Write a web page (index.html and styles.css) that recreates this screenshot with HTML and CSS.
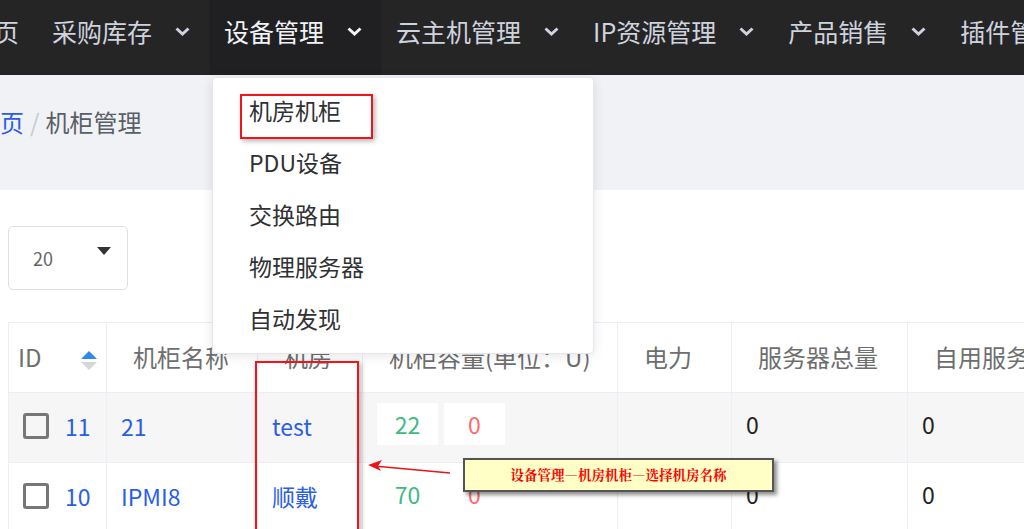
FILE: index.html
```html
<!doctype html>
<html lang="zh-CN">
 <head>
  <meta charset="UTF-8">
  <title>机柜管理</title>
  <link rel="stylesheet" href="styles.css">
 </head>
 <body>
  <div class="topnav">
   <div class="nav-item home">首页</div>
   <div class="nav-item">采购库存 <svg class="chev" viewBox="0 0 15 9"><polyline points="1.5,1.5 7.5,7 13.5,1.5"/></svg></div>
   <div class="nav-item active">设备管理 <svg class="chev" viewBox="0 0 15 9"><polyline points="1.5,1.5 7.5,7 13.5,1.5"/></svg></div>
   <div class="nav-item">云主机管理 <svg class="chev" viewBox="0 0 15 9"><polyline points="1.5,1.5 7.5,7 13.5,1.5"/></svg></div>
   <div class="nav-item">IP资源管理 <svg class="chev" viewBox="0 0 15 9"><polyline points="1.5,1.5 7.5,7 13.5,1.5"/></svg></div>
   <div class="nav-item">产品销售 <svg class="chev" viewBox="0 0 15 9"><polyline points="1.5,1.5 7.5,7 13.5,1.5"/></svg></div>
   <div class="nav-item">插件管理 <svg class="chev" viewBox="0 0 15 9"><polyline points="1.5,1.5 7.5,7 13.5,1.5"/></svg></div>
  </div>

  <div class="breadcrumb">
   <span class="crumb-link">首页</span>
   <span class="crumb-sep">/</span>
   <span class="crumb-cur">机柜管理</span>
  </div>

  <div class="content">
   <div class="page-size">
    <span>20</span>
    <span class="caret"></span>
   </div>

   <table class="grid">
    <colgroup>
     <col style="width:98px"><col style="width:151px"><col style="width:105px"><col style="width:255px">
     <col style="width:114px"><col style="width:176px"><col style="width:200px">
    </colgroup>
    <thead>
     <tr>
      <th class="th-id">ID <span class="sort"><i class="up"></i><i class="down"></i></span></th>
      <th>机柜名称</th>
      <th>机房</th>
      <th>机柜容量(单位：U)</th>
      <th>电力</th>
      <th>服务器总量</th>
      <th>自用服务器</th>
     </tr>
    </thead>
    <tbody>
     <tr class="hover">
      <td><span class="check"></span><a class="link">11</a></td>
      <td><a class="link">21</a></td>
      <td><a class="link">test</a></td>
      <td><span class="cap green">22</span><span class="cap red">0</span></td>
      <td></td>
      <td>0</td>
      <td>0</td>
     </tr>
     <tr>
      <td><span class="check"></span><a class="link">10</a></td>
      <td><a class="link">IPMI8</a></td>
      <td><a class="link">顺戴</a></td>
      <td><span class="cap green">70</span><span class="cap red">0</span></td>
      <td></td>
      <td>0</td>
      <td>0</td>
     </tr>
    </tbody>
   </table>
  </div>

  <!-- open submenu of 设备管理 -->
  <div class="dropdown">
   <div class="dd-item">机房机柜</div>
   <div class="dd-item">PDU设备</div>
   <div class="dd-item">交换路由</div>
   <div class="dd-item">物理服务器</div>
   <div class="dd-item">自动发现</div>
  </div>

  <!-- annotation marks -->
  <div class="mark mark-menu"></div>
  <div class="mark mark-col"></div>
  <svg class="arrow" width="90" height="20" viewBox="0 0 90 20">
   <line x1="84" y1="14" x2="8" y2="7" stroke="#e8141a" stroke-width="1.5"/>
   <polygon points="2,6 16,1 12,7 15,12" fill="#e8141a"/>
  </svg>
  <div class="note">设备管理—机房机柜—选择机房名称</div>
 </body>
</html>
```

FILE: styles.css
```css
* {
  margin: 0;
  padding: 0;
  box-sizing: border-box;
}

body {
  font-family: "Noto Sans CJK SC", "Noto Sans", sans-serif;
  background: #fff;
  width: 1024px;
  height: 529px;
  overflow: hidden;
  position: relative;
}

.topnav {
  height: 75px;
  background: #252526;
  display: flex;
  align-items: stretch;
  margin-left: -46px;
  white-space: nowrap;
}

.nav-item {
  display: flex;
  align-items: center;
  padding: 0 19px 12px 15px;
  color: #cfd3de;
  font-size: 25px;
  line-height: 1;
}

.nav-item.home {
  padding-right: 18px;
}

.nav-item.active {
  background: #202022;
  color: #f2f3f7;
}

.chev {
  width: 15px;
  height: 9px;
  margin-left: 23px;
  fill: none;
  stroke: currentColor;
  stroke-width: 3;
}

.breadcrumb {
  height: 115px;
  background: #f0f2f5;
  display: flex;
  align-items: center;
  font-size: 24px;
  margin-left: -24px;
  padding-bottom: 22px;
}

.crumb-link {
  color: #2a5ee8;
}

.crumb-sep {
  color: #c8cbd1;
  margin: 0 6px 0 6px;
}

.crumb-cur {
  color: #5a5e66;
}

.content {
  padding: 36px 0 0 8px;
}

.page-size {
  width: 120px;
  height: 64px;
  border: 1px solid #dcdfe6;
  border-radius: 5px;
  display: flex;
  align-items: center;
  justify-content: space-between;
  padding: 0 16px 0 24px;
  color: #666;
  font-size: 18px;
}

.caret {
  width: 0;
  height: 0;
  border-left: 7px solid transparent;
  border-right: 7px solid transparent;
  border-top: 8px solid #333;
  margin-top: -14px;
}

.grid {
  margin-top: 32px;
  border-collapse: collapse;
  table-layout: fixed;
  width: 1099px;
  font-size: 23px;
}

.grid th,
.grid td {
  height: 70px;
  border: 1px solid #ebeef5;
  white-space: nowrap;
  overflow: hidden;
}

.grid th {
  font-weight: normal;
  color: #6e6e6e;
  font-size: 24px;
  text-align: left;
  padding-left: 26px;
  padding-bottom: 2px;
}

.grid td {
  padding-left: 14px;
  padding-bottom: 7px;
  color: #222;
}

.grid th.th-id {
  padding-left: 9px;
}

.sort {
  display: inline-flex;
  flex-direction: column;
  gap: 3px;
  margin-left: 34px;
  vertical-align: middle;
}

.sort i {
  width: 0;
  height: 0;
  border-left: 8px solid transparent;
  border-right: 8px solid transparent;
}

.sort .up {
  border-bottom: 8px solid #2f89ea;
}

.sort .down {
  border-top: 8px solid #d6d6d6;
}

.grid tr.hover td {
  background: #f6f6f6;
}

.check {
  display: inline-block;
  width: 26px;
  height: 26px;
  border: 3px solid #777;
  border-radius: 3px;
  vertical-align: middle;
  margin-right: 16px;
}

.link {
  color: #2a5ee8;
  vertical-align: middle;
}

.cap {
  display: inline-block;
  width: 61px;
  height: 42px;
  line-height: 42px;
  text-align: center;
  background: #fff;
  margin-right: 6px;
}

.green {
  color: #42b983;
}

.red {
  color: #ff6b6e;
}

.dropdown {
  position: absolute;
  left: 212px;
  top: 77px;
  width: 382px;
  height: 277px;
  background: #fff;
  border: 1px solid #e4e7ed;
  border-radius: 4px;
  box-shadow: 0 2px 12px rgba(0, 0, 0, 0.1);
  padding-top: 6px;
}

.dd-item {
  height: 52px;
  line-height: 52px;
  padding-left: 36px;
  font-size: 23px;
  color: #303133;
}

.mark {
  position: absolute;
  border: 2px solid #f2141b;
  box-shadow: 2px 2px 5px rgba(0, 0, 0, 0.3);
}

.mark-menu {
  left: 240px;
  top: 94px;
  width: 133px;
  height: 45px;
}

.mark-col {
  left: 255px;
  top: 361px;
  width: 104px;
  height: 180px;
}

.arrow {
  position: absolute;
  left: 366px;
  top: 459px;
}

.note {
  position: absolute;
  left: 463px;
  top: 458px;
  width: 311px;
  height: 34px;
  background: #ffffc6;
  border: 2px solid #555;
  box-shadow: 3px 3px 4px rgba(0, 0, 0, 0.45);
  color: #f00;
  font-weight: bold;
  font-size: 13.5px;
  text-align: center;
  line-height: 28px;
  font-family: "Noto Serif CJK SC", "Noto Sans CJK SC", serif;
}
```
